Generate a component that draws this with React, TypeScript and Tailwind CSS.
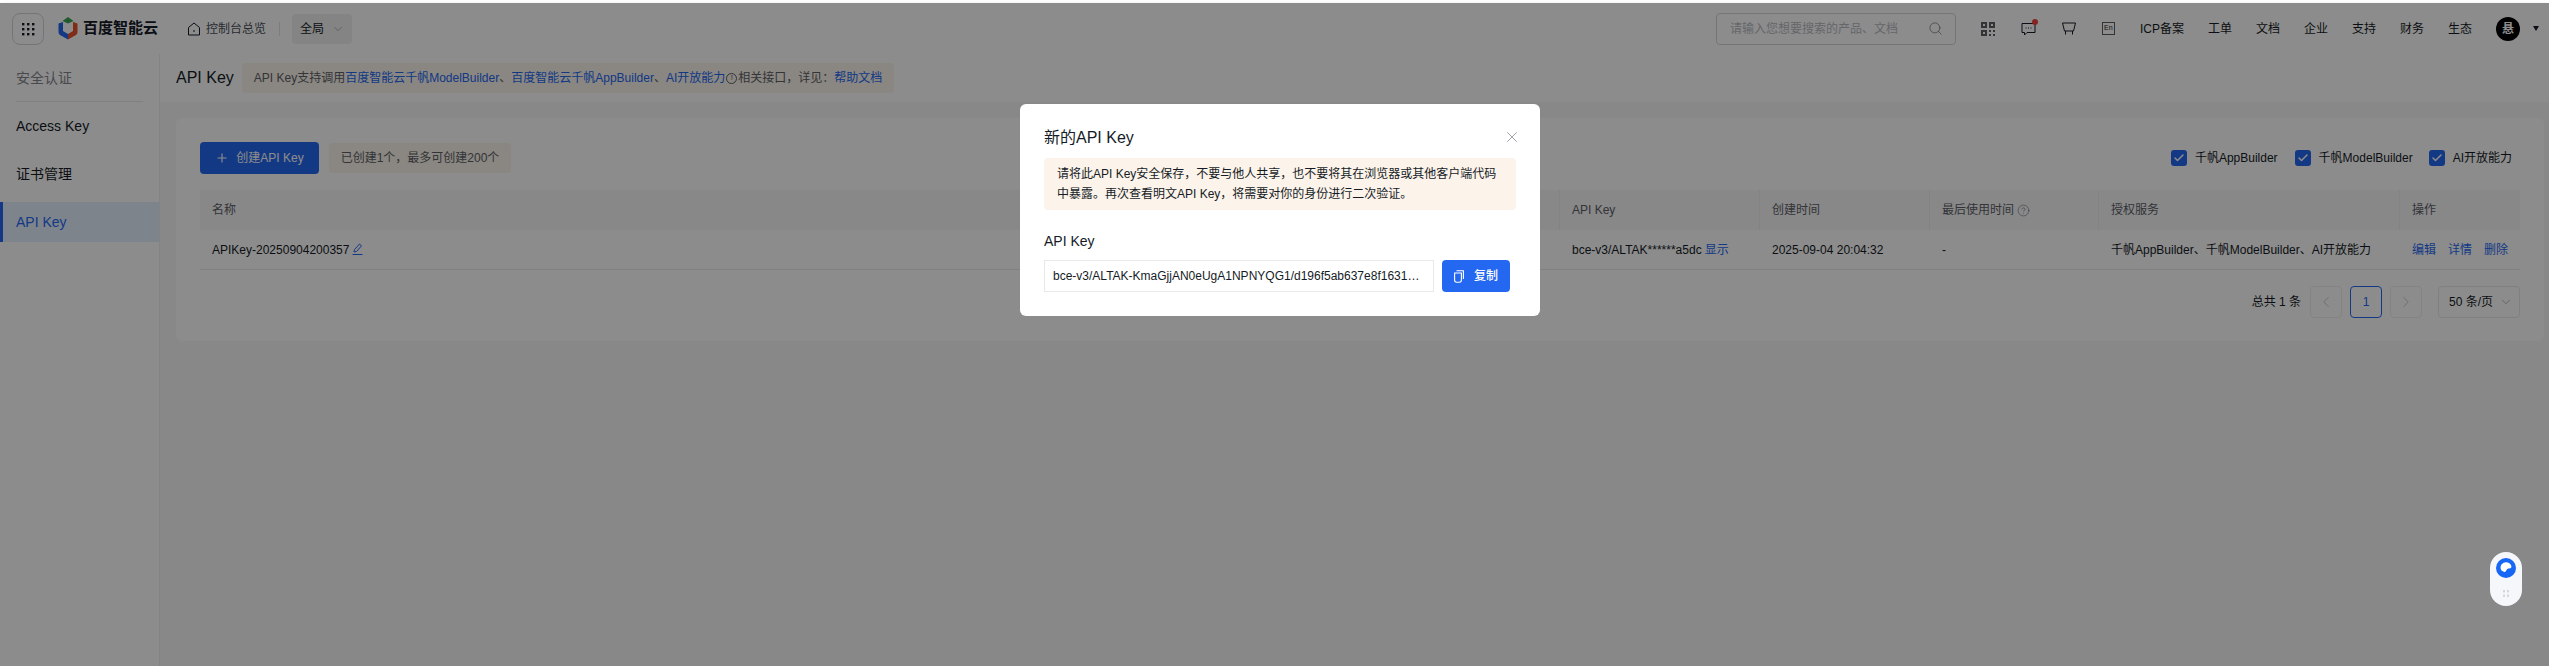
import React from 'react';
import { ChevronDown, ChevronLeft, ChevronRight, Search, X, Plus, Check, CircleHelp } from 'lucide-react';

const Blue = ({ children }: { children: React.ReactNode }) => <span className="text-[#2468f2]">{children}</span>;

const Cb = ({ label, className }: { label: string; className: string }) => (
  <div className={`flex items-center ${className}`}>
    <span className="flex h-4 w-4 items-center justify-center rounded-[3px] bg-[#2468f2]">
      <Check size={12} strokeWidth={3} className="text-white" />
    </span>
    <span className="ml-2 text-xs text-[#151b26]">{label}</span>
  </div>
);

const Nav = ({ children }: { children: React.ReactNode }) => <span className="text-xs text-[#151b26]">{children}</span>;

const Th = ({ w, children, sep = true }: { w: string; children?: React.ReactNode; sep?: boolean }) => (
  <div className={`flex h-full items-center border-[#eeeff1] px-3 ${sep ? 'border-r' : ''} ${w}`}>{children}</div>
);

const Td = ({ w, children }: { w: string; children?: React.ReactNode }) => (
  <div className={`flex h-full items-center whitespace-nowrap px-3 ${w}`}>{children}</div>
);

const Logo = () => (
  <svg width="20" height="23" viewBox="0 0 20 23">
    <path d="M10 0 L15.5 4 L10 6.5 L4.5 4 Z" fill="#3aa655" />
    <path d="M0.5 6.5 L5 5 L5 14 L10 17 L10 22.5 L2 18 Q0.5 17 0.5 15 Z" fill="#2468f2" />
    <path d="M19.5 6.5 L15 5 L15 14 L10 17 L10 22.5 L18 18 Q19.5 17 19.5 15 Z" fill="#e8502f" />
  </svg>
);

const HomeIcon = () => (
  <svg width="14" height="14" viewBox="0 0 14 14" fill="none" stroke="#151b26" strokeWidth="1" className="ml-[29px]">
    <path d="M7 1 L12.5 5.5 V13 H1.5 V5.5 Z" strokeLinejoin="round" />
    <path d="M7 8 V10" />
  </svg>
);

const Qr = () => (
  <svg width="14" height="14" viewBox="0 0 14 14" fill="#5c5f66">
    <path d="M0 0h6v6H0zM8 0h6v6H8zM0 8h6v6H0zM8 8h2v2H8zM12 8h2v2h-2zM8 12h2v2H8zM12 12h2v2h-2z" />
    <path d="M2 2h2v2H2zM10 2h2v2h-2zM2 10h2v2H2z" fill="#ffffff" />
  </svg>
);

const Msg = () => (
  <svg width="15" height="14" viewBox="0 0 15 14" fill="none" stroke="#151b26" strokeWidth="1">
    <path d="M1 1.5 H14 V10.5 H6 L3.5 13 V10.5 H1 Z" />
    <path d="M4.5 6 H5.5 M7 6 H8 M9.5 6 H10.5" />
  </svg>
);

const Cart = () => (
  <svg width="14" height="13" viewBox="0 0 14 13" fill="none" stroke="#151b26" strokeWidth="1">
    <path d="M0.5 1 H13.5 L11.5 9 H2.5 Z" />
    <path d="M3.5 9 V12.5 M10.5 9 V12.5" />
  </svg>
);

const EditIcon = () => (
  <svg width="11" height="13" viewBox="0 0 11 13" fill="none" stroke="#2468f2" strokeWidth="1" className="ml-[3px]">
    <path d="M2 9 L2.5 6.5 L7.5 1 L9.5 2.8 L4.5 8.5 Z" />
    <path d="M0.5 11.5 H10.5" />
  </svg>
);

const CopyIcon = () => (
  <svg width="10" height="13" viewBox="0 0 10 13" fill="none" stroke="#ffffff" strokeWidth="1.1" className="mr-[10px]">
    <path d="M2.5 0.8 H9.4 V9" />
    <path d="M0.6 3 H7.4 V10 Q7.4 12.2 5.4 12.2 H2.6 Q0.6 12.2 0.6 10 Z" />
  </svg>
);

export default function App() {
  return (
    <div className="flex h-[666px] w-full flex-col overflow-hidden bg-white font-['Liberation_Sans','Noto_Sans_CJK_SC',sans-serif]">
      <div className="h-[3px] shrink-0 bg-white" />
      <div className="relative flex min-h-0 flex-1 flex-col bg-[#f7f7f9]">
        {/* Top bar */}
        <header className="flex h-[51px] shrink-0 items-center bg-white pl-3 shadow-[0_1px_4px_rgba(0,0,0,0.1)]">
          <div className="flex h-8 w-8 items-center justify-center rounded-lg border border-[#d4d6d9]">
            <svg width="14" height="14" viewBox="0 0 14 14" fill="#151b26">
              {[1, 6, 11].flatMap((y) => [1, 6, 11].map((x) => <rect key={`${x}-${y}`} x={x} y={y} width="2.4" height="2.4" />))}
            </svg>
          </div>
          <div className="ml-[14px] flex items-center">
            <Logo />
            <span className="ml-[5px] text-[15px] font-bold text-[#151b26]">百度智能云</span>
          </div>
          <HomeIcon />
          <span className="ml-[5px] text-xs text-[#4a4f59]">控制台总览</span>
          <span className="ml-[13px] h-[14px] w-px bg-[#e2e3e6]" />
          <div className="ml-3 flex h-[30px] w-[60px] items-center rounded bg-[#f0f1f3] pl-2 text-xs text-[#151b26]">
            全局
            <ChevronDown size={14} strokeWidth={1} className="ml-[7px] text-[#84868c]" />
          </div>
          <div className="ml-auto flex items-center pr-[10px]">
            <div className="flex h-8 w-[240px] items-center justify-between rounded border border-[#d4d6d9] pl-[13px] pr-3">
              <span className="text-xs text-[#b8babf]">请输入您想要搜索的产品、文档</span>
              <Search size={15} strokeWidth={1} className="text-[#5c5f66]" />
            </div>
            <div className="ml-[25px] flex w-[134px] items-center justify-between">
              <Qr />
              <span className="relative flex">
                <Msg />
                <span className="absolute -right-[2px] -top-[3px] h-[6px] w-[6px] rounded-full bg-[#f33e3e]" />
              </span>
              <Cart />
              <span className="flex h-[13px] w-[13px] items-center justify-center border border-[#5c5f66] text-[7px] text-[#151b26]">En</span>
            </div>
            <div className="ml-[25px] flex items-center gap-6">
              <Nav>ICP备案</Nav>
              <Nav>工单</Nav>
              <Nav>文档</Nav>
              <Nav>企业</Nav>
              <Nav>支持</Nav>
              <Nav>财务</Nav>
              <Nav>生态</Nav>
            </div>
            <span className="ml-6 flex h-6 w-6 items-center justify-center rounded-full bg-black text-xs font-bold text-white">悬</span>
            <span className="ml-[13px] h-0 w-0 border-x-[3px] border-t-[5px] border-x-transparent border-t-[#151b26]" />
          </div>
        </header>

        <div className="flex min-h-0 flex-1">
          {/* Sidebar */}
          <aside className="w-40 shrink-0 border-r border-[#eeeff1] bg-white">
            <div className="mx-4 flex h-[48px] items-center border-b border-[#e8e9eb] text-sm text-[#84868c]">安全认证</div>
            <div className="flex h-12 items-center pl-4 text-sm text-[#151b26]">Access Key</div>
            <div className="flex h-12 items-center pl-4 text-sm text-[#151b26]">证书管理</div>
            <div className="mt-1 flex h-10 items-center border-l-[3px] border-[#2468f2] bg-[#e6f0ff] pl-[13px] text-sm text-[#2468f2]">API Key</div>
          </aside>

          <main className="flex min-w-0 flex-1 flex-col">
            <div className="flex h-12 shrink-0 items-center bg-white pl-4">
              <span className="text-base text-[#151b26]">API Key</span>
              <div className="ml-2 flex h-[30px] items-center rounded-sm bg-[#fbf5ec] px-3 text-xs text-[#5c5f66]">
                API Key支持调用<Blue>百度智能云千帆ModelBuilder</Blue>、<Blue>百度智能云千帆AppBuilder</Blue>、<Blue>AI开放能力</Blue>
                <span className="mx-[1px] inline-flex h-[11px] w-[11px] items-center justify-center rounded-full border border-[#5c5f66] text-[8px]">!</span>
                相关接口，详见：<Blue>帮助文档</Blue>
              </div>
            </div>
            <div className="min-h-0 flex-1 pl-4 pr-[5px] pt-4">
              <div className="h-[223px] rounded-md bg-white px-6 pt-6">
                <div className="flex h-8 items-center">
                  <button className="flex h-8 w-[119px] items-center justify-center rounded bg-[#2468f2] text-xs text-white">
                    <Plus size={14} strokeWidth={2} className="mr-[7px]" />
                    创建API Key
                  </button>
                  <div className="ml-[10px] flex h-[30px] w-[182px] items-center justify-center rounded bg-[#fbf5ec] text-xs text-[#5c5f66]">已创建1个，最多可创建200个</div>
                  <div className="ml-auto flex items-center pr-2">
                    <Cb label="千帆AppBuilder" className="" />
                    <Cb label="千帆ModelBuilder" className="ml-[17px]" />
                    <Cb label="AI开放能力" className="ml-4" />
                  </div>
                </div>
                <div className="mt-4 flex h-10 items-center bg-[#f7f7f9] text-xs text-[#5c5f66]">
                  <Th w="w-[1360px]">名称</Th>
                  <Th w="w-[200px]">API Key</Th>
                  <Th w="w-[170px]">创建时间</Th>
                  <Th w="w-[169px]">
                    最后使用时间
                    <CircleHelp size={13} strokeWidth={1} className="ml-[3px]" />
                  </Th>
                  <Th w="w-[301px]">授权服务</Th>
                  <Th w="w-[120px]" sep={false}>操作</Th>
                </div>
                <div className="flex h-10 items-center border-b border-[#e8e9eb] text-xs text-[#151b26]">
                  <Td w="w-[1360px]">
                    APIKey-20250904200357
                    <EditIcon />
                  </Td>
                  <Td w="w-[200px]">
                    bce-v3/ALTAK******a5dc<span className="ml-[3px] text-[#2468f2]">显示</span>
                  </Td>
                  <Td w="w-[170px]">2025-09-04 20:04:32</Td>
                  <Td w="w-[169px]">-</Td>
                  <Td w="w-[301px]">千帆AppBuilder、千帆ModelBuilder、AI开放能力</Td>
                  <Td w="w-[120px]">
                    <span className="flex gap-3 text-[#2468f2]">
                      <span>编辑</span>
                      <span>详情</span>
                      <span>删除</span>
                    </span>
                  </Td>
                </div>
                <div className="mt-4 flex items-center justify-end text-xs text-[#151b26]">
                  <span>总共 1 条</span>
                  <span className="ml-[9px] flex h-8 w-8 items-center justify-center rounded border border-[#eeeff1] text-[#b8babf]">
                    <ChevronLeft size={18} strokeWidth={1} />
                  </span>
                  <span className="ml-2 flex h-8 w-8 items-center justify-center rounded border border-[#2468f2] text-[#2468f2]">1</span>
                  <span className="ml-2 flex h-8 w-8 items-center justify-center rounded border border-[#eeeff1] text-[#b8babf]">
                    <ChevronRight size={18} strokeWidth={1} />
                  </span>
                  <span className="ml-4 flex h-8 w-[82px] items-center justify-between rounded border border-[#e8e9eb] pl-[10px] pr-[6px]">
                    50 条/页
                    <ChevronDown size={14} strokeWidth={1} className="text-[#84868c]" />
                  </span>
                </div>
              </div>
            </div>
          </main>
        </div>

        {/* Mask and modal */}
        <div className="absolute inset-0 bg-black/45 pl-[1020px] pt-[101px]">
          <div className="h-[212px] w-[520px] rounded-md bg-white px-6 pt-[22px]">
            <div className="flex items-start justify-between">
              <span className="text-base leading-6 text-[#151b26]">新的API Key</span>
              <X size={18} strokeWidth={1} className="mr-[-5px] mt-[2px] text-[#84868c]" />
            </div>
            <div className="mt-2 rounded bg-[#fcf3ea] px-[13px] py-[6px] text-xs leading-5 text-[#151b26]">
              请将此API Key安全保存，不要与他人共享，也不要将其在浏览器或其他客户端代码<br />
              中暴露。再次查看明文API Key，将需要对你的身份进行二次验证。
            </div>
            <div className="mt-[22px] text-sm leading-[18px] text-[#151b26]">API Key</div>
            <div className="mt-[10px] flex">
              <div className="flex h-8 w-[390px] items-center border border-[#e8e9eb] pl-2 text-xs text-[#151b26]">
                <span className="truncate">bce-v3/ALTAK-KmaGjjAN0eUgA1NPNYQG1/d196f5ab637e8f1631…</span>
              </div>
              <button className="ml-2 flex h-8 w-[68px] items-center justify-center rounded bg-[#2468f2] text-xs font-medium text-white">
                <CopyIcon />
                复制
              </button>
            </div>
          </div>
        </div>

        {/* Floating widget */}
        <div className="absolute left-[2490px] top-[549px] flex h-[54px] w-[32px] flex-col items-center rounded-full bg-[#f5f7fb] pt-[6px]">
          <svg width="20" height="20" viewBox="0 0 20 20">
            <circle cx="10" cy="10" r="10" fill="#1766f5" />
            <path d="M4.5 9.5 A5.5 5 0 0 1 15.5 9 Q15 10.5 12.5 10.5 Q11 10.5 10.5 12 Q10 14 8.5 14 Q4.5 13 4.5 9.5 Z" fill="#fff" />
          </svg>
          <svg className="mt-3" width="8" height="8" viewBox="0 0 8 8" fill="#d4d6d9">
            <rect x="1" y="0" width="2" height="2.4" />
            <rect x="5" y="0" width="2" height="2.4" />
            <rect x="1" y="4.5" width="2" height="2.4" />
            <rect x="5" y="4.5" width="2" height="2.4" />
          </svg>
        </div>
      </div>
    </div>
  );
}
